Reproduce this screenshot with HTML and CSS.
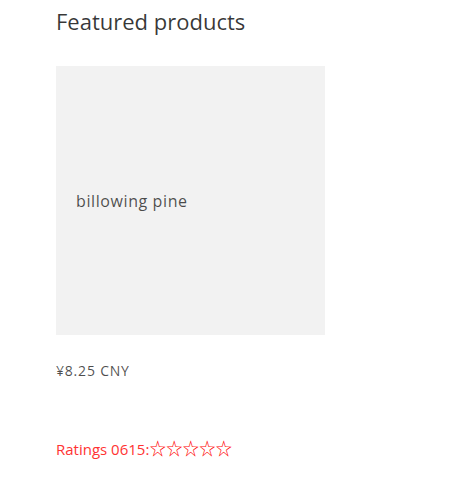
FILE: index.html
```html
<!DOCTYPE html>
<html>
<head>
<meta charset="utf-8">
<link rel="stylesheet" href="styles.css">
</head>
<body>
<section class="featured">
  <h2 class="title">Featured products</h2>
  <div class="card">
    <div class="media"><span class="name">billowing pine</span></div>
    <div class="price">¥8.25 CNY</div>
    <div class="ratings">Ratings 0615:<span class="stars">☆☆☆☆☆</span></div>
  </div>
</section>
</body>
</html>
```
FILE: styles.css
```css
body {
  margin: 0;
  font-family: "Open Sans", "Liberation Sans", sans-serif;
  background: #fff;
}
.featured {
  padding: 0 56px;
}
.title {
  margin: 0;
  padding-top: 6px;
  font-size: 22px;
  font-weight: 400;
  letter-spacing: 0;
  color: rgba(18,18,18,0.85);
  line-height: 30px;
}
.card {
  margin-top: 30px;
}
.media {
  width: 269px;
  height: 269px;
  background: #f2f2f2;
  display: flex;
  align-items: center;
  padding-left: 20px;
  box-sizing: border-box;
}
.name {
  font-size: 16px;
  letter-spacing: 0.6px;
  color: rgba(18,18,18,0.75);
}
.price {
  margin-top: 26px;
  font-size: 14px;
  letter-spacing: 0.8px;
  color: rgba(18,18,18,0.75);
}
.ratings {
  margin-top: 59px;
  font-size: 15px;
  line-height: 20px;
  color: #f33;
}
.stars {
  color: red;
  font-family: "Noto Sans CJK SC", "DejaVu Sans", sans-serif;
  font-size: 16.5px;
  line-height: 1;
  letter-spacing: 0;
}
```
